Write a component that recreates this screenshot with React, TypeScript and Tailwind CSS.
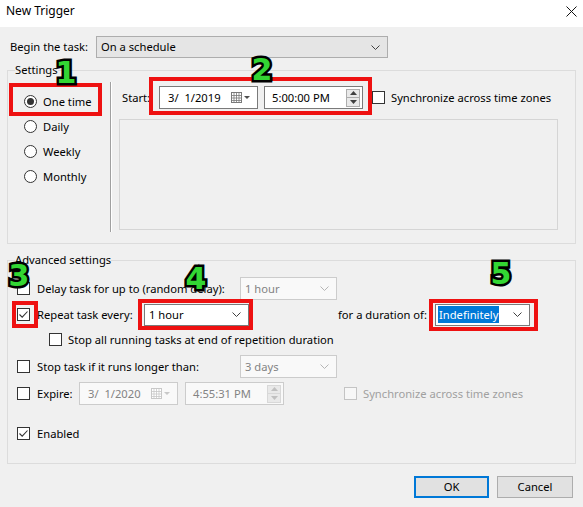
import type { ReactNode } from "react";

// Windows "New Trigger" dialog with tutorial annotations on top

const ANNOTATION_BOXES = [
  "left-[9px] top-[83px] w-[93px] h-[33px]",
  "left-[149px] top-[77px] w-[223px] h-[38px]",
  "left-[12px] top-[301px] w-[26px] h-[27px]",
  "left-[138px] top-[299px] w-[115px] h-[31px]",
  "left-[429px] top-[299px] w-[109px] h-[32px]",
];

const ANNOTATION_NUMBERS = [
  { n: "1", pos: "left-[66px] top-[73px]" },
  { n: "2", pos: "left-[262px] top-[70px]" },
  { n: "3", pos: "left-[19px] top-[276px]" },
  { n: "4", pos: "left-[196px] top-[279px]" },
  { n: "5", pos: "left-[501px] top-[274px]" },
];

const SCHEDULES = [
  { label: "One time", checked: true },
  { label: "Daily", checked: false },
  { label: "Weekly", checked: false },
  { label: "Monthly", checked: false },
];

function Chevron({ color = "#404040" }: { color?: string }) {
  return (
    <svg width="9" height="5" viewBox="0 0 9 5" fill="none" className="shrink-0">
      <path d="M0.5 0.5 L4.5 4.5 L8.5 0.5" stroke={color} strokeWidth="1" />
    </svg>
  );
}

function CheckBox({ checked = false, disabled = false }: { checked?: boolean; disabled?: boolean }) {
  return (
    <span
      className={`w-[13px] h-[13px] border flex items-center justify-center shrink-0 ${
        disabled ? "border-[#c4c4c4] bg-[#f7f7f7]" : "border-[#333333] bg-white"
      }`}
    >
      {checked && (
        <svg width="11" height="11" viewBox="0 0 11 11" fill="none">
          <path d="M1.5 5.5 L4.2 8.2 L9.5 2.5" stroke="#333" strokeWidth="1.1" />
        </svg>
      )}
    </span>
  );
}

function Radio({ checked }: { checked: boolean }) {
  return (
    <span className="w-[13px] h-[13px] rounded-full border border-[#333333] bg-white flex items-center justify-center shrink-0">
      {checked && <span className="w-[7px] h-[7px] rounded-full bg-[#333333]" />}
    </span>
  );
}

function Combo({
  value,
  className,
  disabled = false,
  selected = false,
}: {
  value: string;
  className: string;
  disabled?: boolean;
  selected?: boolean;
}) {
  return (
    <div
      className={`flex items-center pl-[2px] pr-[7px] border ${className} ${
        disabled ? "border-[#cccccc] bg-[#f9f9f9] text-[#838383]" : "border-[#7a7a7a] bg-white"
      }`}
    >
      <span className={`flex-1 ${selected ? "" : "pl-[2px]"}`}>
        <span className={selected ? "bg-[#0078d7] text-white px-[1px] py-[1px]" : ""}>{value}</span>
      </span>
      <Chevron color={disabled ? "#b5b5b5" : "#404040"} />
    </div>
  );
}

function CalendarDrop({ disabled = false }: { disabled?: boolean }) {
  const c = disabled ? "#c8c8c8" : "#7a7a7a";
  return (
    <svg width="20" height="11" viewBox="0 0 20 11" fill="none" className="shrink-0">
      <rect x="0.5" y="0.5" width="10" height="10" stroke={c} fill="#fff" />
      <path d="M0.5 3.5 H10.5 M0.5 6 H10.5 M0.5 8.5 H10.5 M3 0.5 V10.5 M5.5 0.5 V10.5 M8 0.5 V10.5" stroke={c} strokeWidth="0.8" />
      <path d="M13 4 H19 L16 7 Z" fill={disabled ? "#c8c8c8" : "#505050"} />
    </svg>
  );
}

function Spin({ disabled = false }: { disabled?: boolean }) {
  const c = disabled ? "#c0c0c0" : "#404040";
  const b = disabled ? "border-[#d8d8d8]" : "border-[#adadad]";
  return (
    <div className={`w-[14px] h-[18px] flex flex-col border ${b} bg-[#e9e9e9] shrink-0`}>
      <div className={`flex-1 flex items-center justify-center border-b ${b}`}>
        <svg width="7" height="4" viewBox="0 0 7 4"><path d="M0 4 L3.5 0 L7 4 Z" fill={c} /></svg>
      </div>
      <div className="flex-1 flex items-center justify-center">
        <svg width="7" height="4" viewBox="0 0 7 4"><path d="M0 0 L3.5 4 L7 0 Z" fill={c} /></svg>
      </div>
    </div>
  );
}

function DateBox({ value, disabled = false }: { value: string; disabled?: boolean }) {
  return (
    <div
      className={`w-[99px] h-[23px] border flex items-center pl-[8px] pr-[6px] ${
        disabled ? "border-[#cccccc] bg-[#f9f9f9] text-[#838383]" : "border-[#7a7a7a] bg-white"
      }`}
    >
      <span className="flex-1 whitespace-pre">{value}</span>
      <CalendarDrop disabled={disabled} />
    </div>
  );
}

function TimeBox({ value, disabled = false }: { value: string; disabled?: boolean }) {
  return (
    <div
      className={`w-[99px] h-[23px] border flex items-center pl-[7px] pr-[2px] ${
        disabled ? "border-[#cccccc] bg-[#f9f9f9] text-[#838383]" : "border-[#7a7a7a] bg-white"
      }`}
    >
      <span className="flex-1">{value}</span>
      <Spin disabled={disabled} />
    </div>
  );
}

function Group({ title, className, children }: { title: string; className: string; children: ReactNode }) {
  return (
    <fieldset className={`border border-[#dcdcdc] ${className}`}>
      <legend className="ml-[7px] leading-[16px]">{title}</legend>
      {children}
    </fieldset>
  );
}

export default function App() {
  return (
    <div className="relative w-[583px] h-[507px] overflow-hidden bg-[#f0f0f0] text-[11.2px] leading-[16px] text-black font-['Noto_Sans',sans-serif]">
      {/* title bar */}
      <div className="h-[27px] bg-white flex items-start justify-between pl-[6px] pr-[6px] pt-[3px] text-[12px]">
        <span>New Trigger</span>
        <svg width="11" height="11" viewBox="0 0 11 11" className="mt-[3px]">
          <path d="M0.5 0.5 L10.5 10.5 M10.5 0.5 L0.5 10.5" stroke="#111" strokeWidth="1" />
        </svg>
      </div>

      <div className="px-[7px]">
        <div className="mt-[9px] flex items-center h-[22px]">
          <span className="ml-[3px] w-[86px]">Begin the task:</span>
          <div className="w-[292px] h-[22px] flex items-center border border-[#adadad] bg-[#e5e5e5] pl-[4px] pr-[7px]">
            <span className="flex-1">On a schedule</span>
            <Chevron />
          </div>
        </div>

        <Group title="Settings" className="mt-[4px] w-[569px] h-[182px]">
          <div className="flex">
            <div className="w-[102px] pt-[11px] pl-[16px]">
              {SCHEDULES.map((s) => (
                <div key={s.label} className="h-[25px] flex items-center gap-[6px]">
                  <Radio checked={s.checked} />
                  <span>{s.label}</span>
                </div>
              ))}
            </div>
            <div className="mt-[4px] w-[2px] h-[150px] border-l border-l-[#a0a0a0] border-r border-r-white" />
            <div className="flex flex-col">
              <div className="mt-[8px] h-[23px] flex items-center">
                <span className="ml-[10px] w-[37px]">Start:</span>
                <DateBox value="3/  1/2019" />
                <div className="ml-[6px]">
                  <TimeBox value="5:00:00 PM" />
                </div>
                <div className="ml-[9px] flex items-center gap-[6px]">
                  <CheckBox />
                  <span>Synchronize across time zones</span>
                </div>
              </div>
              <div className="mt-[10px] ml-[7px] w-[439px] h-[111px] border border-[#d5d5d5]" />
            </div>
          </div>
        </Group>

        <Group title="Advanced settings" className="mt-[8px] w-[569px] h-[212px]">
          <div className="pl-[9px]">
            <div className="mt-[9px] h-[23px] flex items-center">
              <div className="w-[223px] flex items-center gap-[7px]">
                <CheckBox />
                <span>Delay task for up to (random delay):</span>
              </div>
              <Combo value="1 hour" className="w-[97px] h-[23px]" disabled />
            </div>

            <div className="mt-[3px] h-[23px] flex items-center">
              <div className="w-[127px] flex items-center gap-[7px]">
                <CheckBox checked />
                <span>Repeat task every:</span>
              </div>
              <Combo value="1 hour" className="w-[105px] h-[22px]" />
              <span className="ml-[89px] w-[97px]">for a duration of:</span>
              <Combo value="Indefinitely" className="w-[95px] h-[22px]" selected />
            </div>

            <div className="mt-[2px] h-[23px] flex items-center pl-[32px] gap-[6px]">
              <CheckBox />
              <span>Stop all running tasks at end of repetition duration</span>
            </div>

            <div className="mt-[4px] h-[23px] flex items-center">
              <div className="w-[223px] flex items-center gap-[7px]">
                <CheckBox />
                <span>Stop task if it runs longer than:</span>
              </div>
              <Combo value="3 days" className="w-[97px] h-[23px]" disabled />
            </div>

            <div className="mt-[4px] h-[23px] flex items-center">
              <div className="w-[62px] flex items-center gap-[7px]">
                <CheckBox />
                <span>Expire:</span>
              </div>
              <DateBox value="3/  1/2020" disabled />
              <div className="ml-[7px]">
                <TimeBox value="4:55:31 PM" disabled />
              </div>
              <div className="ml-[60px] flex items-center gap-[6px] text-[#a0a0a0]">
                <CheckBox disabled />
                <span>Synchronize across time zones</span>
              </div>
            </div>

            <div className="mt-[17px] h-[23px] flex items-center gap-[7px]">
              <CheckBox checked />
              <span>Enabled</span>
            </div>
          </div>
        </Group>

        <div className="mt-[12px] pr-[3px] flex justify-end gap-[8px]">
          <button className="w-[75px] h-[22px] border-2 border-[#0078d7] bg-[#e1e1e1] flex items-center justify-center">
            OK
          </button>
          <button className="w-[76px] h-[22px] border border-[#adadad] bg-[#e1e1e1] flex items-center justify-center">
            Cancel
          </button>
        </div>
      </div>

      {/* tutorial annotations */}
      {ANNOTATION_BOXES.map((pos) => (
        <div key={pos} className={`absolute border-[4px] border-[#ee1111] ${pos}`} />
      ))}
      {ANNOTATION_NUMBERS.map((a) => (
        <span
          key={a.n}
          className={`absolute -translate-x-1/2 -translate-y-1/2 leading-none text-[30px] font-bold text-[#33d633] font-['DejaVu_Sans',sans-serif] [-webkit-text-stroke:5px_#000] [paint-order:stroke_fill] ${a.pos}`}
        >
          {a.n}
        </span>
      ))}
    </div>
  );
}
